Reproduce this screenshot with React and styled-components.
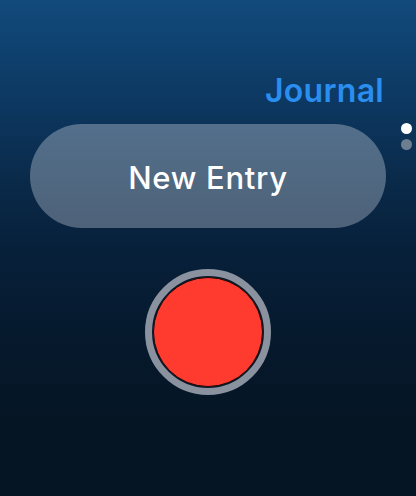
import React from "react";
import styled, { createGlobalStyle } from "styled-components";

const GlobalStyle = createGlobalStyle`
  html, body {
    margin: 0;
    padding: 0;
    background: #051524;
  }
  body {
    font-family: Inter, "Noto Sans", sans-serif;
  }
`;

const Screen = styled.div`
  position: relative;
  width: 416px;
  height: 496px;
  overflow: hidden;
  box-sizing: border-box;
  padding: 72px 30px 0 30px;
  display: flex;
  flex-direction: column;
  background: linear-gradient(
    180deg,
    #114a7c 0px,
    #0d3a64 90px,
    #0a2a4a 180px,
    #07203a 250px,
    #061a2e 330px,
    #051524 420px,
    #051524 496px
  );
`;

const Header = styled.div`
  display: flex;
  justify-content: flex-end;
  padding-right: 2px;
`;

const Title = styled.h1`
  margin: 0;
  font-size: 32px;
  font-weight: 600;
  line-height: 38px;
  color: #2a8ef0;
  letter-spacing: 0.3px;
`;

const PageDots = styled.div`
  position: absolute;
  right: 4px;
  top: 123px;
  display: flex;
  flex-direction: column;
  gap: 5px;
`;

const Dot = styled.span`
  width: 11px;
  height: 11px;
  border-radius: 50%;
  background: ${({ active }) => (active ? "#ffffff" : "#6e7e91")};
`;

const EntryButton = styled.button`
  margin-top: 14px;
  height: 104px;
  width: 356px;
  border: none;
  border-radius: 52px;
  background: linear-gradient(180deg, #536f8b 0%, #4e6279 100%);
  color: #ffffff;
  font-family: inherit;
  font-size: 31px;
  font-weight: 500;
  letter-spacing: 0.7px;
  display: flex;
  align-items: center;
  justify-content: center;
  padding: 2px 0 0 0;
`;

const RecordWrap = styled.div`
  margin-top: 41px;
  display: flex;
  justify-content: center;
`;

const RecordRing = styled.div`
  width: 126px;
  height: 126px;
  border-radius: 50%;
  box-sizing: border-box;
  border: 7px solid #8a929f;
  background: #0a1a2b;
  display: flex;
  align-items: center;
  justify-content: center;
`;

const RecordDot = styled.div`
  width: 110px;
  height: 110px;
  border-radius: 50%;
  box-sizing: border-box;
  border: 1.5px solid #1a0a0a;
  background: #ff3b30;
`;

export default function App() {
  return (
    <>
      <GlobalStyle />
      <Screen>
        <Header>
          <Title>Journal</Title>
        </Header>
        <PageDots>
          <Dot active />
          <Dot />
        </PageDots>
        <EntryButton>New Entry</EntryButton>
        <RecordWrap>
          <RecordRing>
            <RecordDot />
          </RecordRing>
        </RecordWrap>
      </Screen>
    </>
  );
}
